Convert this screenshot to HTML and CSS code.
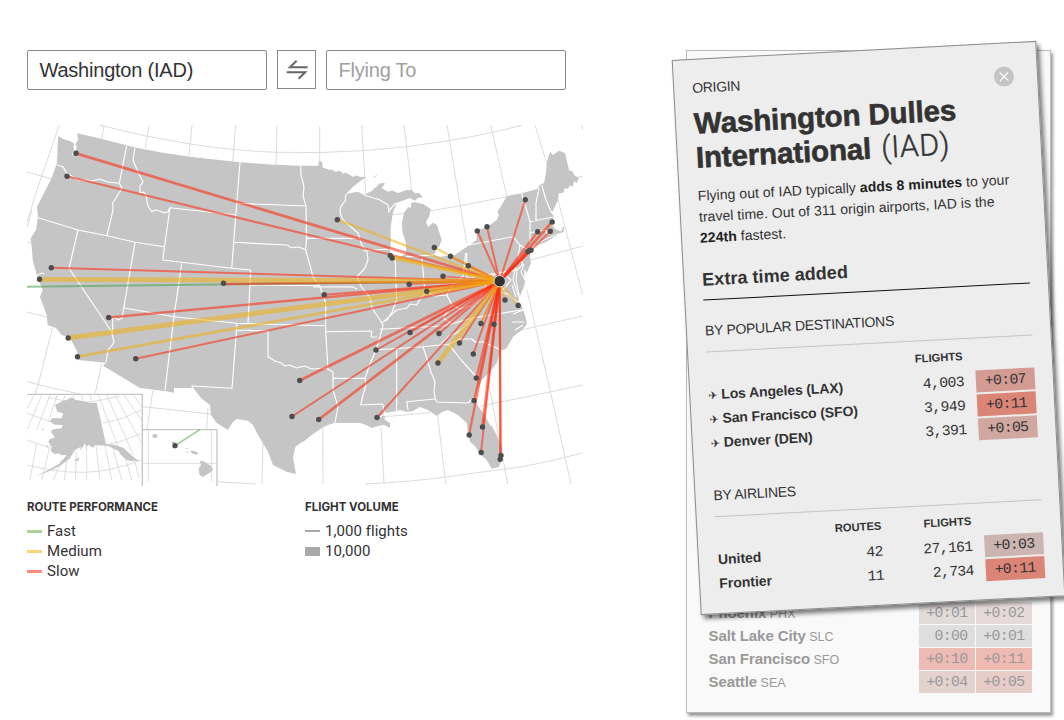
FILE: index.html
```html
<!DOCTYPE html>
<html lang="en">
<head>
<meta charset="utf-8">
<title>Flights</title>
<link rel="stylesheet" href="styles.css">
</head>
<body>
<div class="page">
  <main class="explorer">
    <form class="search">
      <div class="field">Washington (IAD)</div>
      <div class="swap"><svg width="22" height="20" viewBox="286 60 22 20"><path d="M307.7 67.2H290L296.6 60.8M286.7 72.2H305.2L298.6 78.8"/></svg></div>
      <div class="field placeholder">Flying To</div>
    </form>
    <svg class="map" width="556" height="362" viewBox="27 125 556 362">
      <g class="grid">
        <path d="M59.3 125L38 187 27 222M104 125.7L102 139M149 125.7L145 148M192 125L189 156M235.700 125L232.700 162M277 125.700L276 165M319.700 126.700V162M361.700 125L365.700 194M404 125L411.700 190M447 125L456 180 466.700 243M490.700 125L506.700 196M535 125L546.700 163M558 200L582.700 295M581.700 125L582.700 130"/>
        <path d="M99 125Q145 137 190 144T277 152.300T363 150.700 449 140.700 522.700 125M27 172L52 179M390 215L431 210.700 460.700 205.700 506.700 196.700M578 177L583 176M530.700 260L582.700 246M518 330.700L582.700 316M476 407L550 392 582.700 385M365 484Q410 482 445.700 477T506.700 469 582.700 453M384 416.700L430 412.700"/>
        <path d="M527 290L550 390 571 484M322.700 428L323 484M381 428L384 484M437.700 416L445.700 484M488 380L507.700 484M263 443L262 484M218 481.700L255.700 484M208 408L206.700 429M153 390L147 429M142.700 406.700L210.700 414M52.700 326.700L38 385 35 394M101.700 363L96 390 94 394M27 381.700L51.700 388 80 394M27 312L47 317M27 242L31 243M32 210L27 227"/>
      </g>
      <path class="land" d="M58.300 136L63.300 139 70 141 74 143.500 73.500 149 75 152 76.700 148 75.500 144 78 140 77.300 133.300 103 139.300 126.700 145.300 136.700 147.700 163 152.700 190 156.700 210 159 240 162.300 273 164.700 300 165.700 318.300 165.700 319 160.700 322 162 322.700 167.700 327 169 330 170 332 169.500 335 171.700 340 171 343 173.700 346 172.500 348 174 353 176.700 357 175.500 360 177 366.700 176.700 361.700 180 353 186.700 346 194 350 193.300 358 191.700 364 195 371.700 191 380 183.300 385 183.300 381.700 188.300 388 191.700 392 190.500 398 193 406.700 190 411.700 190 415 193.300 419 192.700 422.700 197.300 418 198 415 200.700 410 198 406.700 199.300 400 201.700 395 203 390 208 388.500 213 393 207 397 203 393 212 390.700 226.700 390.700 243.300 390 253 395 256.700 400 257.300 406 253.300 406 243 402.700 233 401.700 223 404 213 408 207 411 208 411 203 415 202.300 423 204 430.700 209 430 213 429 216.700 426 222 428 227 433 222.700 437 225 441.700 240 439 246.700 437 248 434 255 440 256.700 446.700 256 455 255 466.700 246.700 476.700 240 476.700 235 478 230 486.700 227.300 496.700 220 499 215 497.300 211.700 501.700 205 507 196 521.700 193.300 538 188.700 540 184.700 544 183 546 173.300 546.700 163 550 151.700 553 155 559 150.700 565 153 569 170 573 171.700 574 175 579 178 576.700 183 574 181 573 187 570 185 568 189 565 188 563 193 559 193 558 200 555 206.700 551.700 213 554 217 551 223 555 229 561 231.500 563 227 561 226 564 227 563.500 232 557 234 552 236 541.700 240.700 533 246.700 531 251 530 257 531 263 526.700 273 524 269 525 283 522.700 290 518 301 521.700 306 525 315 527 324 522 330 513 336.700 506.700 348 500 352 496.700 363 490 372 481.700 380 477 390 475 397 477 405 486.700 416.700 496.700 435 502 448 501.700 460 499 467 491.700 468.700 486.700 460 480 454 475 446 470 441.700 468 433 466.700 423 458 415 448 410 442 412 436.700 416 428 410 420 407 413 411 406.700 411.700 400 410 393 411.700 384 413 385 420 390 423 390 428 384 425 378 426 371.700 428 366 425 360 423 346.700 423 335 422.700 328 425 321.700 428 311.700 435 303 442 295 448 293 458 296 474 286.700 471.700 273 465 268 451.700 258 435 253 425 248 420.700 236.700 419 232 423 228 430 216.700 423 211 415 210 405 201 398 193.300 388 174 388 174 392.700 165 391 140 388 103 365.700 106 362.700 78 360 77.300 351.700 70 338 61.700 335 56 328 47.700 325 46.700 315 40 297 42.700 290 36.700 275 32.700 260 31.500 245 30.700 238 36 230 38 216.700 37 206.700 51.700 178 57 163 57.700 143Z"/>
      <path class="land" d="M372 178L378 174 375 177ZM533 247L545 240 559 234 546 242Z"/>
      <path class="water" d="M515 268L513 280 517 292 520 300 518 290 516 280 517 270ZM512 285L516 297M524 264L521 272 525 280M513 314L526 309M512 322L524 322M515 330L523 325M500 292L508 294 517 302M303 442L296 447 295 455M386 413L380 417M44 274L42 273 37 275M76 146L75 150 72 155M478 404L484 413 491 426"/>
      <g class="borders">
        <path d="M57 165L63 166.700 66.700 173 78 180 88 180 92 181 100 179 108 182 119.300 183.300M126.700 145.300L119.300 183.300 122 188 116 198 112.700 203 113 210 107 235.700M38 217.700L78 230 107 235.700 135 242.300 164 246.700M135 147.700L133 160 138 172 143 181.700 140 186 140 193 143 192 146 195 148 206 151.700 211.700 155 210 160 211 164 213 168 211.700 170 207.700 235.700 215M170 207.700L162.700 260 231.700 268.300 250.700 270M240 162.300L236.700 203.300 231.700 268.300M236.700 203.300L306 206M300.700 165.700L301 175 304 186.700 303 196 306 206 306.500 238 305.700 250 309 262 313 276.700 320 286.700 325.700 303V331.700M233.700 242.300L286.700 245 291.700 247.700 299 247 305.700 250"/>
        <path d="M250.700 270L248 323.300M250.300 285L320 285.700M181.700 263.300L174 316.700 165 390M123 307.700L174 316.700 236.700 323.300 325.700 325.700M135 242.300L122 318 118 320 116 318H112.700V331.700M78 230L69 268.300 111.700 331.700 114 342.700 108 350 106 362.700M237 323.300L232 388.300 192 386 193 390M236.700 330L268 331V356.700L275 361 281 363 285 366 290 365 296 368 305 366 311 369 325.700 368 333 372V390L338 406.700 335 422.700M325.700 331.700L328 370M332.700 378.300H365M325.700 331.700L371.700 331 371 337H377M306.700 238.300H356.700M313 287L352 286.700 357 289"/>
        <path d="M346 194L345 201 340.700 206.700 340 213 343 220 358 233 362 246 366.700 250 368 260 365 268 357 276.700 361 286 370 298 372 308 380 320 383 325 380 337 376 350 370 364 365 378.300 366 385 363 395 360.700 405 382.700 404 385 416M363 250.700L390 249M395 256.700L396.700 300 392 312 387 320 383 322 396.700 310 407 308 410 304 416.700 305 420 299 426.700 291.700 435 296 446.700 295 453 284 463 276.700 465.700 253M421.700 256.700L425 291.700M406 256.700L434 255M380 329.300L443 326 473 318 523 309.700M374 350L423 346.700 450 344 460 339 471.700 339 475 342 483 341.700 503 351M441 344L449 336 456.700 333 464 327 473 318M396.700 348V390L396.500 411M423 346.700L431 372 435 381.700 434 391 435 398 437 402 468 403 474 397M435 399L406.700 401.700 408 410M448 344L455 352 462 361 471 371 476.700 377"/>
        <path d="M364 195L380 200 388 205 389 213M469 241V245L513 236.700 520 245 518 256.700 523 264 517 270 466.700 278V253M520 245L528 250M521.700 193.300L524 203 527 211 530 222V243M539 188.700L536 203 536 221M541.700 185L546 200 551.700 213M530 221.700L548 218 553 217M530 232.700L546 230M546 230L547 234M446.700 295L452 305 460 309 471 306 480 298 486 285 494 275 502 272 511 280 503 290M452 305L443 318 452 324"/>
      </g>
      <g class="inset" transform="translate(20 380) scale(.33333)">
        <g class="grid"><path d="M42 45L22 85M65 45L22 150M90 45L50 150M112 45L85 125M135 45L125 80M160 45V55M185 45L188 60M210 45L215 62M235 45L300 215M260 45L340 225M285 45L365 190M312 45L365 120M340 45L365 80M50 190L30 300M92 190L65 300M125 240L100 300M142 225L133 300M168 215L167 300M200 195V300M228 195L240 300M255 195L275 300M278 200L305 300M308 205L335 300M345 245L356 292M22 100L90 125M22 180L90 205M22 255Q110 278 190 277T365 240M250 130Q310 118 365 90M255 195L300 185 365 160M85 52Q170 75 235 62L300 48M385 150V303M574 150V303M368 250H590"/></g>
        <path class="land" d="M105 75L130 62 140 60 155 52 168 60 190 63 210 68 230 68 240 110 258 193 270 193 285 195 310 203 330 222 345 235 357 242 340 242 325 235 300 215 265 198 225 195 220 203 205 195 198 200 195 190 180 213 183 200 165 210 150 235 120 258 90 272 45 290 85 270 120 250 140 225 125 226 115 220 105 223 92 212 95 200 85 185 90 178 105 172 92 155 100 148 125 145 128 135 105 134 90 125 95 115 125 115 130 100 112 95ZM162 242L178 232 175 243ZM58 144L75 150 68 150ZM78 196H86L83 201ZM290 200L340 244 320 240 300 222ZM396 166L405 161 413 166 410 174 400 174ZM454 187L463 184 470 194 460 197ZM487 203L507 206 504 208ZM499 214L506 216 501 219ZM512 213L520 212 535 218 530 224 515 220ZM540 242L549 243 570 256 580 269 567 280 548 291 538 283 536 264 543 256ZM379 174H383V176Z"/>
        <path class="frame" d="M22 43H367M367 43V318M367 149H591V318"/>
        <path class="hawaii" d="M465 197L540 149"/><circle class="dot" cx="465" cy="197" r="8"/>
      </g>
      <g class="routes fast"><path class="w2" d="M27 286.700L499.700 281.200"/></g>
      <g class="routes slow">
        <path class="w4" d="M76 153.300L499.700 281.200"/><path class="w2" d="M67 176.300L499.700 281.200"/><path class="w2" d="M51.300 267.700L499.700 281.200"/><path class="w3" d="M223.500 284L499.700 281.200"/><path class="w3" d="M108.700 317.500L499.700 281.200"/><path class="w2" d="M135.700 358.700L499.700 281.200"/><path class="w2" d="M324 294.700L499.700 281.200"/>
        <path class="w4" d="M299.700 380.500L499.700 281.200"/><path class="w2" d="M292 416.500L499.700 281.200"/><path class="w4" d="M318.700 419.500L499.700 281.200"/><path class="w2" d="M377 417.500L499.700 281.200"/><path class="w2" d="M376 350L499.700 281.200"/><path class="w2" d="M410 332.500L499.700 281.200"/><path class="w2" d="M439 333.500L499.700 281.200"/><path class="w2" d="M459.500 343L499.700 281.200"/><path class="w2" d="M473.300 354L499.700 281.200"/>
        <path class="w2" d="M476.300 378L499.700 281.200"/><path class="w3" d="M469 435L499.700 281.200"/><path class="w2" d="M474 400.500L499.700 281.200"/><path class="w4" d="M482.500 427L499.700 281.200"/><path class="w2" d="M481 452.500L499.700 281.200"/><path class="w3" d="M500.700 455.500L499.700 281.200"/><path class="w2" d="M500.300 459.500L499.700 281.200"/><path class="w1" d="M481 323.500L499.700 281.200"/><path class="w1" d="M494 324L499.700 281.200"/>
        <path class="w2" d="M477.300 231L499.700 281.200"/><path class="w2" d="M487 226.700L499.700 281.200"/><path class="w2" d="M525.300 199.700L499.700 281.200"/><path class="w3" d="M537.700 231.700L499.700 281.200"/><path class="w4" d="M552 222L499.700 281.200"/><path class="w2" d="M550.300 231.300L499.700 281.200"/><path class="w4" d="M528 251.500L499.700 281.200"/><path class="w3" d="M531 250.300L499.700 281.200"/><path class="w2" d="M450.500 256.300L499.700 281.200"/><path class="w1" d="M468.300 265.700L499.700 281.200"/><path class="w1" d="M443 276.300L499.700 281.200"/><path class="w1" d="M409 284L499.700 281.200"/><path class="w2" d="M426.700 291.300L499.700 281.200"/>
      </g>
      <g class="routes medium">
        <path class="w6" d="M39.500 279.300L499.700 281.200"/><path class="w6" d="M68.200 338L499.700 281.200"/>
        <path class="w4" d="M77.500 356.700L499.700 281.200"/><path class="w5" d="M392 257.700L499.700 281.200"/><path class="w6" d="M438 363L499.700 281.200"/>
        <path class="w3" d="M337.300 219.700L499.700 281.200"/><path class="w2" d="M390.500 255.500L499.700 281.200"/><path class="w3" d="M434.300 247.500L499.700 281.200"/><path class="w2" d="M518 305.500L499.700 281.200"/><path class="w2" d="M505 300L499.700 281.200"/><path class="w1" d="M481 323.500L499.700 281.200"/>
      </g>
      <path class="dots" d="M76 153.300h0M67 176.300h0M51.300 267.700h0M39.500 279.300h0M223.500 283.300h0M108.700 317.500h0M68.200 338h0M77.500 356.700h0M135.700 358.700h0M324.200 294.700h0M299.700 380.500h0M292 416.500h0M318.700 419.500h0M377 417.500h0M376 350h0M410 332.500h0M439 333.500h0M438 363h0M459.500 343h0M473.300 354h0M476.300 378h0M474 400.500h0M469.200 435h0M482.500 427h0M481.200 452.500h0M501 455.500h0M500.200 459.300h0M481 323.500h0M494 324.300h0M477.300 231h0M487 226.700h0M525.300 199.700h0M537.700 231.700h0M552.200 222h0M550.300 231.300h0M528 251.500h0M531 250.300h0M529.500 250.500h0M468.300 265.700h0M443 276.300h0M409.200 284.200h0M426.700 291.300h0M337.300 219.700h0M390.300 255.500h0M392.200 258h0M434.300 247.500h0M450.500 256.300h0M518.200 305.500h0M505 300h0"/>
      <circle class="hub" cx="499.700" cy="281.200" r="5.700"/>
    </svg>
    <div class="legends">
      <section class="legend">
        <h3>ROUTE PERFORMANCE</h3>
        <div class="key"><i class="sw fast-sw"></i>Fast</div>
        <div class="key"><i class="sw medium-sw"></i>Medium</div>
        <div class="key"><i class="sw slow-sw"></i>Slow</div>
      </section>
      <section class="legend">
        <h3>FLIGHT VOLUME</h3>
        <div class="key"><i class="sw thin-sw"></i>1,000 flights</div>
        <div class="key"><i class="sw thick-sw"></i>10,000</div>
      </section>
    </div>
  </main>
  <aside class="stack">
    <div class="back">
      <div class="brow"><div class="city"><b>Phoenix</b> PHX</div><span class="cell v1">+0:01</span><span class="cell v2">+0:02</span></div>
      <div class="brow"><div class="city"><b>Salt Lake City</b> SLC</div><span class="cell v0">0:00</span><span class="cell v0">+0:01</span></div>
      <div class="brow"><div class="city"><b>San Francisco</b> SFO</div><span class="cell v10">+0:10</span><span class="cell v11">+0:11</span></div>
      <div class="brow"><div class="city"><b>Seattle</b> SEA</div><span class="cell v4">+0:04</span><span class="cell v5">+0:05</span></div>
    </div>
    <article class="front">
      <header class="top"><div class="kicker">ORIGIN</div>
        <svg class="close" width="20" height="20" viewBox="0 0 20 20"><circle cx="10" cy="10" r="10"/><path d="M5.700 5.700L14.300 14.300M14.300 5.700L5.700 14.300"/></svg>
      </header>
      <h1>Washington Dulles<br>International <span class="code">(IAD)</span></h1>
      <p class="intro">Flying out of IAD typically <b>adds 8 minutes</b> to your<br>travel time. Out of 311 origin airports, IAD is the<br><b>224th</b> fastest.</p>
      <h2>Extra time added</h2>
      <h4>BY POPULAR DESTINATIONS</h4>
      <div class="table">
        <div class="trow head"><span></span><span></span><span>FLIGHTS</span></div>
        <div class="trow"><b class="name dest"><i class="plane">✈</i>Los Angeles (LAX)</b><span class="num">4,003</span><span class="delay d7">+0:07</span></div>
        <div class="trow"><b class="name dest"><i class="plane">✈</i>San Francisco (SFO)</b><span class="num">3,949</span><span class="delay d11">+0:11</span></div>
        <div class="trow"><b class="name dest"><i class="plane">✈</i>Denver (DEN)</b><span class="num">3,391</span><span class="delay d5">+0:05</span></div>
      </div>
      <h4 class="airlines">BY AIRLINES</h4>
      <div class="table">
        <div class="trow head"><span></span><span>ROUTES</span><span>FLIGHTS</span></div>
        <div class="trow"><b class="name carrier">United</b><span class="num">42</span><span class="num">27,161</span><span class="delay d3">+0:03</span></div>
        <div class="trow"><b class="name carrier">Frontier</b><span class="num">11</span><span class="num">2,734</span><span class="delay d11">+0:11</span></div>
      </div>
    </article>
  </aside>
</div>
</body>
</html>
```
FILE: styles.css
```css
* { box-sizing: border-box; }
body { margin: 0; background: #fff; color: #333; font-family: "Liberation Sans", Arial, sans-serif; overflow: hidden; }
h1, h2, h3, h4, p { margin: 0; }
.page { display: flex; gap: 120px; height: 720px; padding: 50px 0 0 27px; overflow: hidden; }
.explorer { width: 539px; flex: none; }
.search { display: flex; gap: 10px; margin: 0; }
.field { width: 240px; height: 40px; flex: none; border: 1px solid #888; border-radius: 2px; padding-left: 11.5px; font-size: 20px; line-height: 39px; letter-spacing: -.22px; }
.placeholder { color: #a0a0a0; }
.swap { width: 39px; height: 39px; flex: none; border: 1px solid #888; display: flex; align-items: center; justify-content: center; }
.swap path { fill: none; stroke: #666; stroke-width: 2; }
.map { display: block; margin-top: 35px; overflow: hidden; }
.grid { fill: none; stroke: #d2d2d2; stroke-width: .8; }
.inset .grid { stroke-width: 2.2; }
.land { fill: #c5c5c5; }
.water { fill: none; stroke: #fff; stroke-width: 1.1; }
.borders { fill: none; stroke: #fff; stroke-width: 1.15; stroke-linejoin: round; }
.frame { fill: none; stroke: #c5c5c5; stroke-width: 4; }
.hawaii { fill: none; stroke: #93cd90; stroke-width: 5; }
.dot { fill: #4d4d4d; }
.routes { fill: none; stroke-opacity: .6; }
.w1 { stroke-width: 1.6px; }
.w2 { stroke-width: 2px; }
.w3 { stroke-width: 2.3px; }
.w4 { stroke-width: 2.8px; }
.w5 { stroke-width: 3.7px; }
.w6 { stroke-width: 4.8px; }
.fast { stroke: #4fa458; }
.medium { stroke: #f0b010; stroke-opacity: .55; }
.slow { stroke: #ff2a0d; stroke-opacity: .57; }
.dots { fill: none; stroke: #4d4d4d; stroke-width: 5.4; stroke-linecap: round; }
.hub { fill: #333; stroke: #ddd; stroke-width: 1; }
.legends { display: flex; margin-top: 12px; }
.legend { width: 278px; flex: none; font-family: Roboto, sans-serif; }
.legend h3 { font-family: Inter, sans-serif; font-size: 11.5px; line-height: 16px; font-weight: 700; margin-bottom: 6px; }
.key { display: flex; align-items: center; gap: 5px; height: 20px; font-size: 15px; letter-spacing: .05px; }
.sw { width: 15px; height: 3px; }
.fast-sw { background: #add297; }
.medium-sw { background: #f8d677; }
.slow-sw { background: #fb8a7b; }
.thin-sw { height: 2px; background: #a8a9ab; }
.thick-sw { height: 9px; background: #a8a9ab; }
.stack { position: relative; width: 365px; height: 663px; flex: none; }
.back { height: 663px; border: 1px solid #bbb; background: #f9f9f9; box-shadow: 2px 3px 3px rgba(0,0,0,.4); padding: 0 18px 19.5px 21.5px; display: flex; flex-direction: column; justify-content: flex-end; gap: 1px; }
.brow { display: grid; flex: none; grid-template-columns: 1fr 56px 56px; column-gap: 1px; height: 22px; color: #999; font-size: 12.5px; line-height: 22px; }
.city { white-space: nowrap; height: 22px; }
.city b { font-size: 15px; letter-spacing: -.08px; }
.cell, .delay, .num { font-family: "Liberation Mono", monospace; font-size: 14.8px; letter-spacing: -.65px; text-align: right; height: 22px; }
.cell { padding-right: 7.5px; }
.v0 { background: #dedede; }
.v1 { background: #e1dbda; }
.v2 { background: #e5dad9; }
.v4 { background: #e4d2cf; }
.v5 { background: #e7ccc8; }
.v10 { background: #ecbbb3; }
.v11 { background: #eebab1; }
.front { position: absolute; left: 0; top: 0; width: 365px; height: 556px; transform: rotate(-3deg); background: #ededed; border: 1px solid #8c8c8c; box-shadow: 3px 4px 4px rgba(0,0,0,.5); padding: 18px 18px 0; }
.top { display: flex; justify-content: space-between; height: 20px; padding-right: 5px; }
.kicker { font-size: 14px; line-height: 20px; letter-spacing: -.3px; }
.close { margin-top: 5px; }
.close circle { fill: #c4c4c4; }
.close path { stroke: #fff; stroke-width: 1.2; }
h1 { margin-top: 9px; font-size: 29.5px; line-height: 34px; font-weight: 700; letter-spacing: -.12px; -webkit-text-stroke: .6px #333; }
.code { font-family: Roboto, sans-serif; font-weight: 300; font-size: 30.5px; line-height: 30px; letter-spacing: .3px; margin-left: 2px; -webkit-text-stroke: .4px #333; }
.intro { margin-top: 10.5px; font-size: 14px; line-height: 21px; white-space: nowrap; letter-spacing: .04px; }
.intro b { color: #222; }
h2 { margin-top: 20px; font-size: 18px; line-height: 22px; padding-bottom: 9.5px; border-bottom: 1px solid #111; letter-spacing: .05px; }
h4 { margin-top: 20px; font-size: 14px; line-height: 20px; font-weight: 400; letter-spacing: -.27px; padding-bottom: 11px; border-bottom: 1px solid #c4c4c4; }
.airlines { margin-top: 31px; }
.table { display: flex; flex-direction: column; gap: 2px; padding-top: 10px; }
.trow { display: grid; grid-template-columns: 84px 82px 90px 12px 59px; height: 22px; line-height: 22px; }
.head { height: 20px; font-size: 11.2px; line-height: 15px; font-weight: 700; text-align: right; }
.name { font-size: 14px; line-height: 21px; white-space: nowrap; }
.dest { grid-column: 1 / 3; letter-spacing: -.12px; }
.carrier { padding-left: 1px; }
.plane { display: inline-block; width: 13px; font: 400 11px "DejaVu Sans", sans-serif; letter-spacing: 0; }
.delay { grid-column: 5; padding-right: 9px; }
.d3 { background: #ccb5b0; }
.d5 { background: #d0a8a0; }
.d7 { background: #d49b92; }
.d11 { background: #db8577; }
```
